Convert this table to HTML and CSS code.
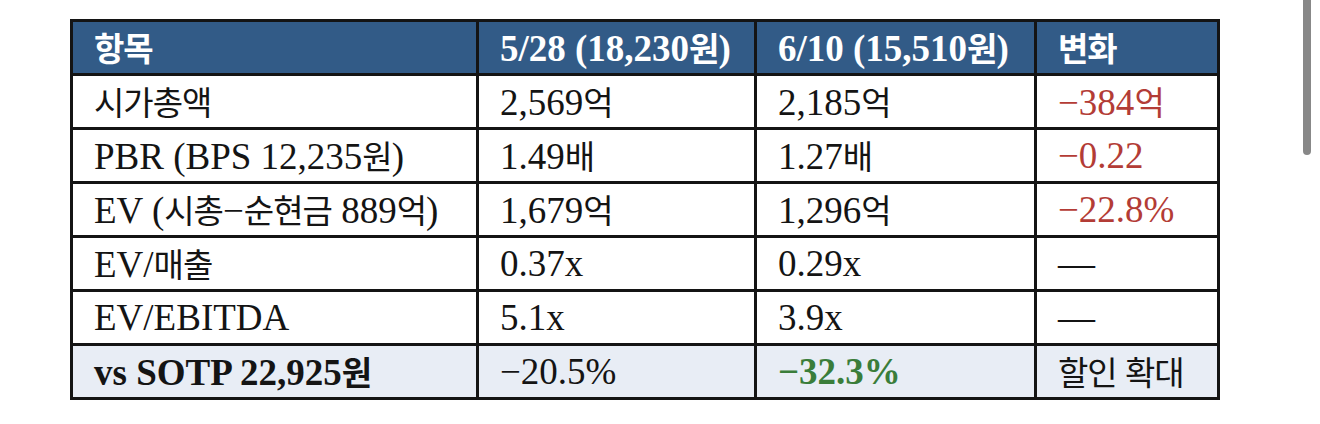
FILE: index.html
```html
<!DOCTYPE html>
<html lang="ko">
<head>
<meta charset="utf-8">
<title>밸류에이션 비교</title>
<link rel="stylesheet" href="styles.css">
</head>
<body>
<table class="val">
  <colgroup>
    <col class="c1"><col class="c2"><col class="c3"><col class="c4">
  </colgroup>
  <thead>
    <tr>
      <th><span class="k">항목</span></th>
      <th>5/28 (18,230<span class="k">원</span>)</th>
      <th>6/10 (15,510<span class="k">원</span>)</th>
      <th><span class="k">변화</span></th>
    </tr>
  </thead>
  <tbody>
    <tr>
      <td><span class="k">시가총액</span></td>
      <td>2,569<span class="k">억</span></td>
      <td>2,185<span class="k">억</span></td>
      <td class="neg">−384<span class="k">억</span></td>
    </tr>
    <tr>
      <td>PBR (BPS 12,235<span class="k">원</span>)</td>
      <td>1.49<span class="k">배</span></td>
      <td>1.27<span class="k">배</span></td>
      <td class="neg">−0.22</td>
    </tr>
    <tr>
      <td>EV (<span class="k">시총</span>−<span class="k">순현금</span> 889<span class="k">억</span>)</td>
      <td>1,679<span class="k">억</span></td>
      <td>1,296<span class="k">억</span></td>
      <td class="neg">−22.8%</td>
    </tr>
    <tr>
      <td>EV/<span class="k">매출</span></td>
      <td>0.37x</td>
      <td>0.29x</td>
      <td>—</td>
    </tr>
    <tr>
      <td>EV/EBITDA</td>
      <td>5.1x</td>
      <td>3.9x</td>
      <td>—</td>
    </tr>
    <tr class="sum">
      <td class="strong">vs SOTP 22,925<span class="k">원</span></td>
      <td>−20.5%</td>
      <td class="pos">−32.3%</td>
      <td><span class="k">할인 확대</span></td>
    </tr>
  </tbody>
</table>
<div class="scrollbar"></div>
</body>
</html>
```
FILE: styles.css
```css
html, body {
  margin: 0;
  padding: 0;
  background: #ffffff;
}

body {
  font-family: "Liberation Serif", "Noto Sans CJK KR", serif;
  color: #141414;
}

.val {
  border-collapse: collapse;
  table-layout: fixed;
  width: 1150px;
  margin: 19px 0 0 70px;
  font-size: 37px;
}

.c1 { width: 406px; }
.c2 { width: 278px; }
.c3 { width: 280px; }
.c4 { width: 183px; }

.val th,
.val td {
  border: 3px solid #141414;
  padding: 0 0 0 21px;
  height: 51px;
  text-align: left;
  vertical-align: middle;
  line-height: 42px;
  white-space: nowrap;
}

.val th {
  background: #325b87;
  color: #ffffff;
  font-weight: 700;
}

.k {
  font-family: "Noto Sans CJK KR", sans-serif;
  font-size: 33px;
  letter-spacing: -1px;
}

.val th .k {
  font-weight: 700;
}

.val td .k {
  font-weight: 400;
}

.val td.strong .k {
  font-weight: 700;
}

.neg {
  color: #b33c36;
}

.pos {
  color: #3a7d3a;
  font-weight: 700;
}

.strong {
  font-weight: 700;
}

.sum td {
  background: #e8edf5;
}

.scrollbar {
  position: fixed;
  top: -10px;
  right: 9px;
  width: 8px;
  height: 165px;
  border-radius: 4px;
  background: #888888;
}
```
